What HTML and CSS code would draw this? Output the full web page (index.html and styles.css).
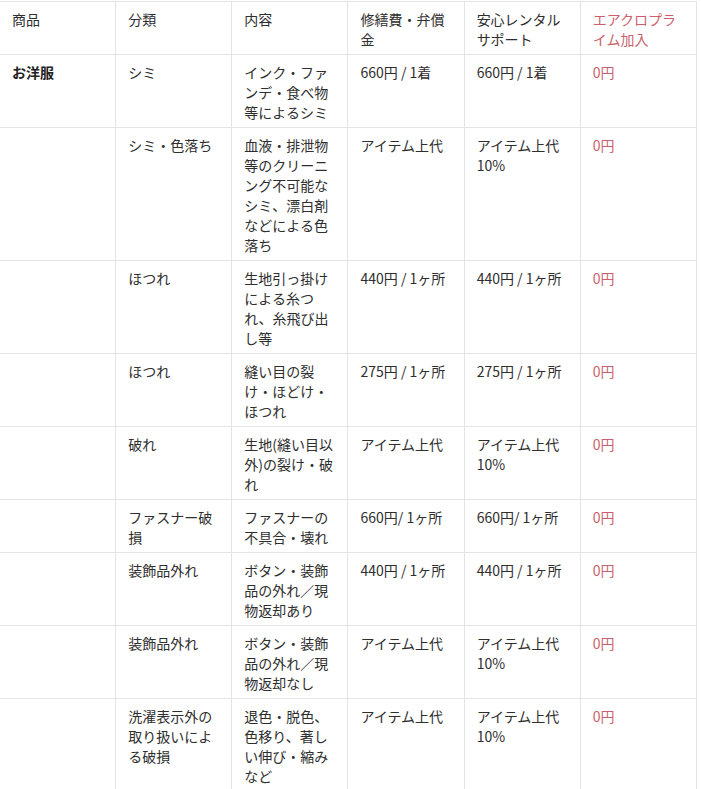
FILE: index.html
```html
<!DOCTYPE html>
<html lang="ja">
<head>
<meta charset="utf-8">
<link rel="stylesheet" href="styles.css">
</head>
<body>
<table class="tbl">
  <thead>
    <tr>
      <th>商品</th>
      <th>分類</th>
      <th>内容</th>
      <th>修繕費・弁償金</th>
      <th>安心レンタルサポート</th>
      <th class="red">エアクロプライム加入</th>
    </tr>
  </thead>
  <tbody>
    <tr>
      <td class="bold">お洋服</td>
      <td>シミ</td>
      <td>インク・ファンデ・食べ物等によるシミ</td>
      <td>660円 / 1着</td>
      <td>660円 / 1着</td>
      <td class="red">0円</td>
    </tr>
    <tr>
      <td></td>
      <td>シミ・色落ち</td>
      <td>血液・排泄物等のクリーニング不可能なシミ、漂白剤などによる色落ち</td>
      <td>アイテム上代</td>
      <td>アイテム上代 10%</td>
      <td class="red">0円</td>
    </tr>
    <tr>
      <td></td>
      <td>ほつれ</td>
      <td>生地引っ掛けによる糸つれ、糸飛び出し等</td>
      <td>440円 / 1ヶ所</td>
      <td>440円 / 1ヶ所</td>
      <td class="red">0円</td>
    </tr>
    <tr>
      <td></td>
      <td>ほつれ</td>
      <td>縫い目の裂け・ほどけ・ほつれ</td>
      <td>275円 / 1ヶ所</td>
      <td>275円 / 1ヶ所</td>
      <td class="red">0円</td>
    </tr>
    <tr>
      <td></td>
      <td>破れ</td>
      <td>生地(縫い目以外)の裂け・破れ</td>
      <td>アイテム上代</td>
      <td>アイテム上代 10%</td>
      <td class="red">0円</td>
    </tr>
    <tr>
      <td></td>
      <td>ファスナー破損</td>
      <td>ファスナーの不具合・壊れ</td>
      <td>660円/ 1ヶ所</td>
      <td>660円/ 1ヶ所</td>
      <td class="red">0円</td>
    </tr>
    <tr>
      <td></td>
      <td>装飾品外れ</td>
      <td>ボタン・装飾品の外れ／現物返却あり</td>
      <td>440円 / 1ヶ所</td>
      <td>440円 / 1ヶ所</td>
      <td class="red">0円</td>
    </tr>
    <tr>
      <td></td>
      <td>装飾品外れ</td>
      <td>ボタン・装飾品の外れ／現物返却なし</td>
      <td>アイテム上代</td>
      <td>アイテム上代 10%</td>
      <td class="red">0円</td>
    </tr>
    <tr>
      <td></td>
      <td>洗濯表示外の取り扱いによる破損</td>
      <td>退色・脱色、色移り、著しい伸び・縮みなど</td>
      <td>アイテム上代</td>
      <td>アイテム上代 10%</td>
      <td class="red">0円</td>
    </tr>
  </tbody>
</table>
</body>
</html>
```

FILE: styles.css
```css
html, body {
  margin: 0;
  padding: 0;
  background: #ffffff;
}
body {
  font-family: "Noto Sans CJK JP", "Noto Sans", sans-serif;
  font-size: 14px;
  line-height: 20px;
  color: #2e2e2e;
  overflow: hidden;
}
.tbl {
  border-collapse: collapse;
  table-layout: fixed;
  width: 698px;
  margin: 1px 0 0 -1px;
}
.tbl th,
.tbl td {
  border: 1px solid #e4e4e4;
  padding: 7px 12px 5px 12px;
  text-align: left;
  vertical-align: top;
  font-weight: normal;
  word-break: normal;
  line-break: strict;
}
.tbl .bold {
  font-weight: bold;
  color: #222222;
}
.tbl .red {
  color: #cc5f6d;
}
```
